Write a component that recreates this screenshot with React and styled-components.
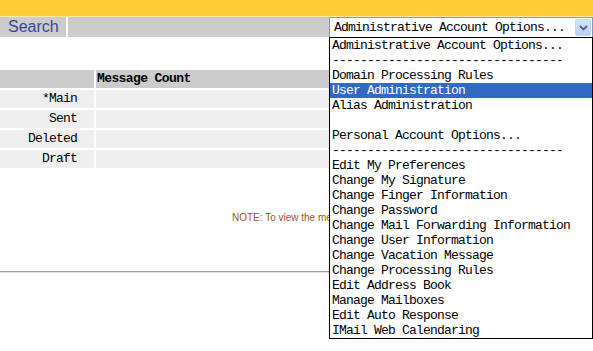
import React from 'react';
import styled, { createGlobalStyle } from 'styled-components';

const GlobalStyle = createGlobalStyle`
  html, body {
    margin: 0;
    padding: 0;
    background: #ffffff;
    overflow: hidden;
  }
  body {
    width: 593px;
    height: 351px;
  }
`;

const mono = `"Liberation Mono", "DejaVu Sans Mono", monospace`;

const folders = ['*Main', 'Sent', 'Deleted', 'Draft'];

const divider = '-'.repeat(33);

const options = [
  'Administrative Account Options...',
  divider,
  'Domain Processing Rules',
  'User Administration',
  'Alias Administration',
  '',
  'Personal Account Options...',
  divider,
  'Edit My Preferences',
  'Change My Signature',
  'Change Finger Information',
  'Change Password',
  'Change Mail Forwarding Information',
  'Change User Information',
  'Change Vacation Message',
  'Change Processing Rules',
  'Edit Address Book',
  'Manage Mailboxes',
  'Edit Auto Response',
  'IMail Web Calendaring',
];

const App = () => {
  return (
    <Page>
      <GlobalStyle />
      <TopBar />
      <NavBar>
        <SearchCell>Search</SearchCell>
        <NavFill />
        <SelectWrap>
          <SelectBox>
            <span>Administrative Account Options...</span>
            <ArrowButton>
              <svg width="9" height="6" viewBox="0 0 9 6">
                <path d="M1 1 L4.5 4.5 L8 1" fill="none" stroke="#4d6185" strokeWidth="1.8" />
              </svg>
            </ArrowButton>
          </SelectBox>
          <OptionList>
            {options.map((o, i) => (
              <OptionItem key={i} $selected={o === 'User Administration'}>
                {o || '\u00a0'}
              </OptionItem>
            ))}
          </OptionList>
        </SelectWrap>
      </NavBar>

      <CountTable>
        <HeadCell />
        <HeadCell $value>Message Count</HeadCell>
        {folders.map((f) => (
          <React.Fragment key={f}>
            <LabelCell>{f}</LabelCell>
            <ValueCell />
          </React.Fragment>
        ))}
      </CountTable>

      <NoteRow>
        <Note>NOTE: To view the messages in a mailbox, click on the mailbox name.</Note>
      </NoteRow>
      <Rule />
    </Page>
  );
};

const Page = styled.div`
  width: 593px;
  height: 351px;
  overflow: hidden;
  background: #ffffff;
`;

const TopBar = styled.div`
  height: 16px;
  background: #ffcc33;
  border-bottom: 1px solid #fbe7a6;
`;

const NavBar = styled.div`
  display: flex;
  height: 20px;
  background: #cccccc;
`;

const SearchCell = styled.div`
  width: 58px;
  padding-left: 8px;
  border-right: 2px solid #ffffff;
  font-family: 'Liberation Sans', Arial, sans-serif;
  font-size: 16px;
  line-height: 20px;
  color: #33479a;
`;

const NavFill = styled.div`
  flex: 1;
`;

const SelectWrap = styled.div`
  position: relative;
  width: 264px;
  z-index: 2;
`;

const SelectBox = styled.div`
  display: flex;
  align-items: center;
  justify-content: space-between;
  height: 20px;
  box-sizing: border-box;
  background: #ffffff;
  border: 1px solid #7f9db9;
  border-bottom: none;
  padding: 0 1px 0 4px;
  font-family: ${mono};
  font-size: 13px;
  letter-spacing: -0.8px;
  color: #000000;
`;

const ArrowButton = styled.div`
  width: 16px;
  height: 17px;
  display: flex;
  align-items: center;
  justify-content: center;
  background: linear-gradient(#d7e3fc, #b9cdf5);
  border: 1px solid #c3d3fd;
  box-sizing: border-box;
  border-radius: 2px;
`;

const OptionList = styled.div`
  position: absolute;
  top: 100%;
  left: 0;
  width: 264px;
  box-sizing: border-box;
  border: 1px solid #000000;
  background: #ffffff;
`;

const OptionItem = styled.div`
  height: 15px;
  line-height: 16px;
  padding-left: 2px;
  white-space: nowrap;
  overflow: hidden;
  font-family: ${mono};
  font-size: 13px;
  letter-spacing: -0.8px;
  color: ${(p) => (p.$selected ? '#ffffff' : '#000000')};
  background: ${(p) => (p.$selected ? '#316ac5' : 'transparent')};
`;

const CountTable = styled.div`
  margin-top: 33px;
  display: grid;
  grid-template-columns: 94px 1fr;
  grid-auto-rows: 18px;
  gap: 2px;
`;

const HeadCell = styled.div`
  background: #cccccc;
  padding-left: 1px;
  font-family: ${mono};
  font-size: 13px;
  font-weight: bold;
  letter-spacing: -0.6px;
  line-height: 18px;
  color: #000000;
`;

const LabelCell = styled.div`
  background: #eeeeee;
  text-align: right;
  padding-right: 17px;
  font-family: ${mono};
  font-size: 13px;
  letter-spacing: -0.8px;
  line-height: 18px;
  color: #000000;
`;

const ValueCell = styled.div`
  background: #eeeeee;
`;

const NoteRow = styled.div`
  margin-top: 44px;
  width: 329px;
  overflow: hidden;
`;

const Note = styled.div`
  padding-left: 232px;
  white-space: nowrap;
  font-family: 'Liberation Sans', Arial, sans-serif;
  font-size: 10px;
  line-height: 12px;
  color: #a0522d;
`;

const Rule = styled.div`
  margin-top: 47px;
  height: 1px;
  background: #a0a0a0;
  border-bottom: 1px solid #e4e4e4;
`;

export default App;
